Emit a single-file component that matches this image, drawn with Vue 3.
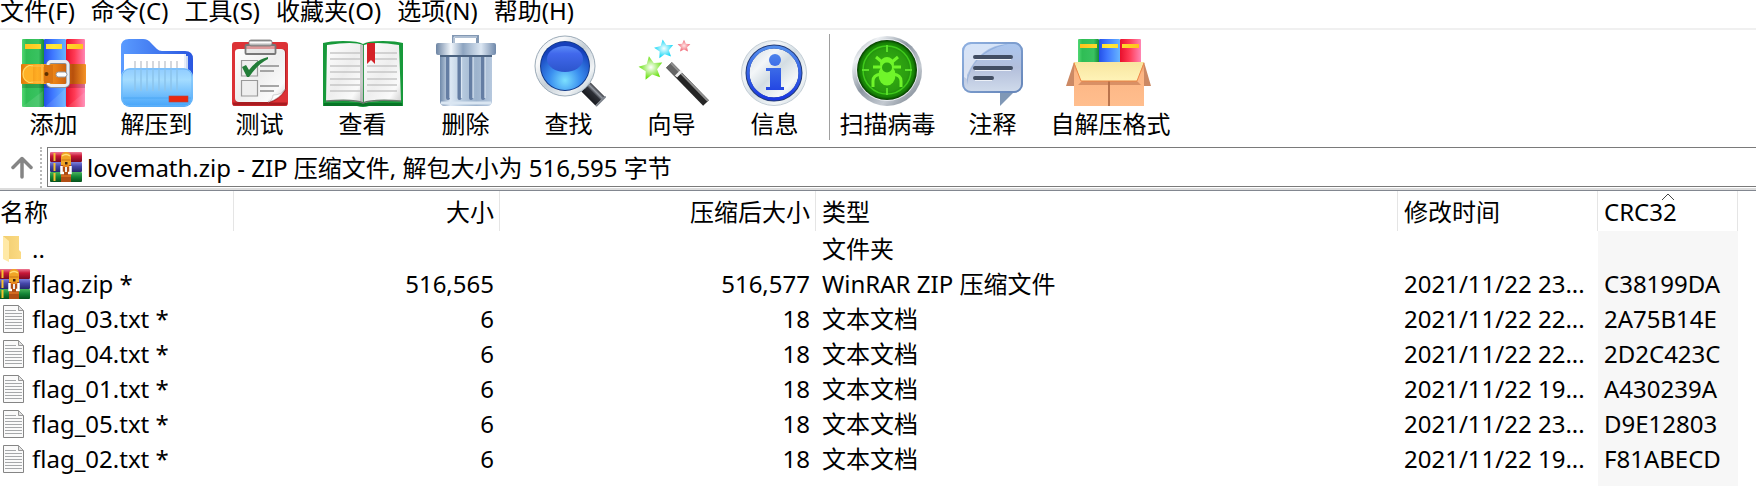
<script setup>
import { ref } from 'vue'

const menus = ['文件(F)', '命令(C)', '工具(S)', '收藏夹(O)', '选项(N)', '帮助(H)']
const mainTools = [
  { id: 'add', label: '添加' },
  { id: 'extract', label: '解压到' },
  { id: 'test', label: '测试' },
  { id: 'view', label: '查看' },
  { id: 'delete', label: '删除' },
  { id: 'find', label: '查找' },
  { id: 'wizard', label: '向导' },
  { id: 'info', label: '信息' }
]
const extraTools = [
  { id: 'scan', label: '扫描病毒' },
  { id: 'comment', label: '注释' },
  { id: 'sfx', label: '自解压格式' }
]
const groups = [mainTools, extraTools]
const address = ref('lovemath.zip - ZIP 压缩文件, 解包大小为 516,595 字节')
const files = [
  { icon: 'folder', name: '..', size: '', packed: '', type: '文件夹', date: '', crc: '' },
  { icon: 'rar', name: 'flag.zip *', size: '516,565', packed: '516,577', type: 'WinRAR ZIP 压缩文件', date: '2021/11/22 23...', crc: 'C38199DA' },
  { icon: 'text', name: 'flag_03.txt *', size: '6', packed: '18', type: '文本文档', date: '2021/11/22 22...', crc: '2A75B14E' },
  { icon: 'text', name: 'flag_04.txt *', size: '6', packed: '18', type: '文本文档', date: '2021/11/22 22...', crc: '2D2C423C' },
  { icon: 'text', name: 'flag_01.txt *', size: '6', packed: '18', type: '文本文档', date: '2021/11/22 19...', crc: 'A430239A' },
  { icon: 'text', name: 'flag_05.txt *', size: '6', packed: '18', type: '文本文档', date: '2021/11/22 23...', crc: 'D9E12803' },
  { icon: 'text', name: 'flag_02.txt *', size: '6', packed: '18', type: '文本文档', date: '2021/11/22 19...', crc: 'F81ABECD' }
]
const star = 'M0 -12L3.6 -4.4L12 -3.4L5.8 2.3L7.4 10.6L0 6.5L-7.4 10.6L-5.8 2.3L-12 -3.4L-3.6 -4.4Z'
</script>

<template>
  <div class="window">
    <svg class="defs" width="0" height="0" aria-hidden="true">
      <defs>
        <linearGradient id="gGreen"><stop offset="0" stop-color="#52d873" /><stop offset=".2" stop-color="#2fbd55" /><stop offset=".75" stop-color="#39c260" /><stop offset="1" stop-color="#168a38" /></linearGradient>
        <linearGradient id="gBlue"><stop offset="0" stop-color="#2450e8" /><stop offset=".4" stop-color="#3f78ff" /><stop offset="1" stop-color="#66b4ff" /></linearGradient>
        <linearGradient id="gRed"><stop offset="0" stop-color="#e8102c" /><stop offset=".45" stop-color="#ff3a55" /><stop offset="1" stop-color="#ff86b4" /></linearGradient>
        <linearGradient id="gYellow"><stop offset="0" stop-color="#ffc21c" /><stop offset=".5" stop-color="#ffe93a" /><stop offset="1" stop-color="#ffc21c" /></linearGradient>
        <linearGradient id="gBelt"><stop offset="0" stop-color="#e07a08" /><stop offset=".25" stop-color="#ffae24" /><stop offset=".55" stop-color="#e67c14" /><stop offset=".8" stop-color="#b8500c" /><stop offset="1" stop-color="#f59427" /></linearGradient>
        <linearGradient id="gBack" x2="1"><stop offset="0" stop-color="#5a9bff" /><stop offset="1" stop-color="#2a57e0" /></linearGradient>
        <linearGradient id="gFront" x2="0" y2="1"><stop offset="0" stop-color="#8fcbff" /><stop offset=".3" stop-color="#a4dcff" /><stop offset="1" stop-color="#45a4fa" /></linearGradient>
        <linearGradient id="gPaper" x2="1" y2="1"><stop offset="0" stop-color="#fff" /><stop offset=".5" stop-color="#eee" /><stop offset=".8" stop-color="#fafafa" /><stop offset="1" stop-color="#ccc" /></linearGradient>
        <linearGradient id="gClip" x2="0" y2="1"><stop offset="0" stop-color="#777" /><stop offset=".4" stop-color="#fff" /><stop offset="1" stop-color="#888" /></linearGradient>
        <linearGradient id="gLid"><stop offset="0" stop-color="#6c84a3" /><stop offset=".25" stop-color="#f2f7fc" /><stop offset=".45" stop-color="#8da4c0" /><stop offset=".75" stop-color="#dce7f3" /><stop offset="1" stop-color="#6f88aa" /></linearGradient>
        <linearGradient id="gBin"><stop offset="0" stop-color="#6f89aa" /><stop offset=".2" stop-color="#dde8f4" /><stop offset=".45" stop-color="#b4c8dd" /><stop offset=".7" stop-color="#9db3cd" /><stop offset="1" stop-color="#b6c8de" /></linearGradient>
        <radialGradient id="gLens" cy=".8" r=".7"><stop offset="0" stop-color="#7ce0ff" /><stop offset=".45" stop-color="#3b90f0" /><stop offset="1" stop-color="#1640bb" /></radialGradient>
        <linearGradient id="gShine" x2="0" y2="1"><stop offset="0" stop-color="#5a8cf6" /><stop offset=".3" stop-color="#4168ec" /><stop offset="1" stop-color="#2c55cc" /></linearGradient>
        <linearGradient id="gHandle" gradientUnits="userSpaceOnUse" x1="58" y1="64" x2="67" y2="55"><stop offset="0" stop-color="#1b1d22" /><stop offset=".5" stop-color="#2c2f36" /><stop offset=".72" stop-color="#9297a0" /><stop offset="1" stop-color="#25272c" /></linearGradient>
        <linearGradient id="gMetal" x2="1" y2="1"><stop offset="0" stop-color="#dce4e9" /><stop offset=".25" stop-color="#fafafa" /><stop offset=".5" stop-color="#c4ced6" /><stop offset=".75" stop-color="#f1f4f6" /><stop offset="1" stop-color="#9eb0bd" /></linearGradient>
        <linearGradient id="gDisc" x2="1" y2="1"><stop offset="0" stop-color="#cdd8e0" /><stop offset=".3" stop-color="#f3f6f8" /><stop offset=".5" stop-color="#d3dde3" /><stop offset=".75" stop-color="#f4f7f8" /><stop offset="1" stop-color="#bccad4" /></linearGradient>
        <linearGradient id="gSteel" x2="1" y2="1"><stop offset="0" stop-color="#77818e" /><stop offset=".2" stop-color="#eef1f4" /><stop offset=".45" stop-color="#8c96a2" /><stop offset=".7" stop-color="#c4cad1" /><stop offset="1" stop-color="#626d7a" /></linearGradient>
        <linearGradient id="gInfo" gradientUnits="userSpaceOnUse" x1="0" y1="10" x2="0" y2="66"><stop offset="0" stop-color="#5591ed" /><stop offset="1" stop-color="#1734e0" /></linearGradient>
        <radialGradient id="gRadar"><stop offset="0" stop-color="#37b411" /><stop offset=".7" stop-color="#2a9c10" /><stop offset=".9" stop-color="#168205" /><stop offset="1" stop-color="#063b00" /></radialGradient>
        <linearGradient id="gBubble" x2="0" y2="1"><stop offset="0" stop-color="#a9c6f0" /><stop offset=".5" stop-color="#b3bfdb" /><stop offset="1" stop-color="#d1dcec" /></linearGradient>
        <linearGradient id="gBubbleShade" x2="1" y2="1"><stop offset="0" stop-color="#8fb0e0" /><stop offset="1" stop-color="#6585b8" /></linearGradient>
        <radialGradient id="gStarG"><stop offset="0" stop-color="#fff" /><stop offset="1" stop-color="#69e010" /></radialGradient>
        <radialGradient id="gStarC"><stop offset="0" stop-color="#f4ffff" /><stop offset="1" stop-color="#16d6f6" /></radialGradient>
        <radialGradient id="gStarR"><stop offset="0" stop-color="#ffe4e4" /><stop offset="1" stop-color="#f06070" /></radialGradient>
        <linearGradient id="gBox" x2="0" y2="1"><stop offset="0" stop-color="#d98b5c" /><stop offset=".25" stop-color="#fcb583" /><stop offset="1" stop-color="#ffbe8e" /></linearGradient>
        <linearGradient id="gFlap" x2="0" y2="1"><stop offset="0" stop-color="#f8e6a0" /><stop offset="1" stop-color="#fff3b8" /></linearGradient>
        <linearGradient id="bRed" x2="0" y2="1"><stop offset="0" stop-color="#ee7a94" /><stop offset=".4" stop-color="#c81838" /><stop offset="1" stop-color="#7a0922" /></linearGradient>
        <linearGradient id="bBlue" x2="0" y2="1"><stop offset="0" stop-color="#7c80dd" /><stop offset=".45" stop-color="#4446a8" /><stop offset="1" stop-color="#26276c" /></linearGradient>
        <linearGradient id="bGreen" x2="0" y2="1"><stop offset="0" stop-color="#48b45a" /><stop offset=".5" stop-color="#128335" /><stop offset="1" stop-color="#06501b" /></linearGradient>
        <linearGradient id="gFold"><stop offset="0" stop-color="#f1cd70" /><stop offset="1" stop-color="#fbda83" /></linearGradient>
        <symbol id="rar" viewBox="0 0 32 30">
          <rect width="32" height="10" rx="1" fill="url(#bRed)" />
          <rect y="10" width="32" height="10" rx="1" fill="url(#bBlue)" />
          <rect y="20" width="32" height="10" rx="1" fill="url(#bGreen)" />
          <path d="M4.500 1V9M4.500 11V19M4.500 21V29" stroke="#f5c22e" stroke-width="2" />
          <rect x="11" y="10" width="10" height="20" fill="#b04e14" />
          <path d="M11 13V5Q11 0 16 0T21 5V13Z" fill="#f0a526" />
          <path d="M12 4Q16 1 20 4" fill="none" stroke="#ffe07a" stroke-width="1.500" />
          <path d="M11.500 8H20.500" stroke="#c87414" stroke-width="1" />
          <rect x="15" y="10" width="2.500" height="2.500" fill="#3c2010" />
          <path d="M11.500 14V21H14M20.500 14V21H18" fill="none" stroke="#fff" stroke-width="2.500" />
          <path d="M13 13H19V15H13Z" fill="#e8851d" />
          <rect x="15" y="15" width="2" height="5" fill="#eee" />
          <path d="M11 24H21" stroke="#d36a20" stroke-width="2" />
        </symbol>
      </defs>
    </svg>

    <nav class="menubar">
      <button v-for="m in menus" :key="m" type="button">{{ m }}</button>
    </nav>

    <div class="toolbar" role="toolbar">
      <div v-for="(group, gi) in groups" :key="gi" class="group">
        <button v-for="t in group" :key="t.id" type="button" :class="['tool', t.id]">
          <svg class="tool-icon" viewBox="0 0 73 72" aria-hidden="true">
            <g v-if="t.id === 'add'">
              <rect x="5" y="4" width="22" height="68" rx="1" fill="url(#gGreen)" />
              <rect x="27" y="4" width="22" height="68" rx="1" fill="url(#gBlue)" />
              <rect x="49" y="4" width="19" height="68" rx="1" fill="url(#gRed)" />
              <path d="M8 9H24V14H8ZM29 9H45V14H29ZM50 9H66V14H50Z" fill="url(#gYellow)" />
              <path d="M5 72L26 56V72ZM28 72L48 54V72ZM50 72L68 57V72Z" fill="#fff" opacity=".1" />
              <path d="M5 49H68V53H5Z" fill="#000" opacity=".16" />
              <rect x="4" y="29" width="65" height="20" rx="1" fill="url(#gBelt)" />
              <path d="M16 30.500H12Q6 33 6 39T12 47.500H16" fill="#ffb127" stroke="#ffda65" stroke-width="1.200" />
              <path d="M14 31H30M14 47H30" stroke="#ffc14e" stroke-width="1" />
              <rect x="31" y="27" width="20" height="24" rx="3" fill="none" stroke="#8a8f98" stroke-width="4" />
              <rect x="31" y="26.500" width="20" height="24" rx="3" fill="none" stroke="#e9edf3" stroke-width="2.800" />
              <rect x="27" y="30" width="9" height="18" fill="#db7512" />
              <path d="M25 29V49" stroke="#ffb641" stroke-width="2" />
              <circle cx="29.500" cy="39" r="2" fill="#5c3000" />
              <rect x="39" y="37" width="11" height="5" rx="2.500" fill="#fff" stroke="#9299a3" stroke-width="1" />
            </g>
            <g v-else-if="t.id === 'extract'">
              <path d="M1 60V12Q1 4 9 4H23Q28 4 31 8L37 14Q39 16 42 16H65Q73 16 73 24V60Z" fill="url(#gBack)" />
              <path d="M60 21H68V40H60Z" fill="#c9d8f2" />
              <path d="M56 19H66V40H56Z" fill="#e9eff9" />
              <path d="M4 19H64V45H4Z" fill="#fff" />
              <rect x="1" y="33" width="72" height="39" rx="9" fill="url(#gFront)" />
              <rect x="2" y="34" width="70" height="37" rx="8" fill="none" stroke="#6bb6f9" stroke-width="1" />
              <path d="M15 26V33M21 26V33M27 26V33M33 26V33M39 26V33M45 26V33M51 26V33M57 26V33" stroke="#c8ccd2" stroke-width="1.500" />
              <path d="M15 34V56M21 34V56M27 34V56M33 34V56M39 34V56M45 34V56M51 34V56M57 34V56" stroke="#8cc4ec" stroke-width="1.500" />
              <path d="M3 63H71" stroke="#379bf0" stroke-width="1" opacity=".5" />
              <rect x="49" y="61" width="19" height="6" fill="#e9280f" stroke="#b64640" stroke-width=".6" />
            </g>
            <g v-else-if="t.id === 'test'">
              <rect x="9" y="7" width="56" height="64" rx="3" fill="#dc3236" />
              <path d="M10 69H64" stroke="#a81b20" stroke-width="3" />
              <path d="M14 17Q14 14 17 14H59Q63 14 63 18V55Q55 66 47 68H17Q12 68 12 64Z" fill="#8c1215" opacity=".5" />
              <path d="M12 17Q12 14 16 14H58Q62 14 62 18V54Q56 63 45 67H16Q12 67 12 63Z" fill="url(#gPaper)" />
              <path d="M62 54Q59 60 50 60Q50 65 45 67Q57 64 62 54Z" fill="#fff" stroke="#bbb" stroke-width=".6" />
              <rect x="22.500" y="10" width="30" height="9" rx="1" fill="#ddd" fill-opacity=".6" stroke="#777" stroke-width="1.800" />
              <rect x="26" y="5" width="23" height="6" rx="2" fill="url(#gClip)" stroke="#777" stroke-width=".8" />
              <path d="M18.500 25.500H34.500V41H18.500ZM18.500 45.500H34.500V61H18.500Z" fill="#eee" stroke="#999" stroke-width="1.200" />
              <path d="M19 32L23 30L26 35Q33 25 45 22V24Q35 29 26 42H24Z" fill="#227d38" />
              <path d="M37 31H56M37 36H51M37 51H56M37 56H51" stroke="#8c8c8c" stroke-width="1.500" />
            </g>
            <g v-else-if="t.id === 'view'">
              <path d="M-3 8Q4 6 17 6Q33 6 37 9Q41 6 57 6Q70 6 77 8V71H43Q37 73 31 71H-3Z" fill="#17993a" />
              <path d="M-2 68H76V71H-2Z" fill="#087426" />
              <path d="M1 10Q28 6 37 10V68Q30 65 0 66Z" fill="url(#gPaper)" />
              <path d="M38 10Q48 6 73 10L75 66Q46 65 38 68Z" fill="url(#gPaper)" />
              <path d="M34 10Q36 9 37.500 10V68Q36 66 34 66Z" fill="#999" opacity=".5" />
              <path d="M0 66Q30 64 37 68Q46 64 75 66" fill="none" stroke="#6b7a6d" stroke-width="1.500" />
              <path d="M4 18H34M4 24H34M4 31H34M4 37H34M4 44H34M4 50H34M4 56H34M41 18H71M41 24H71M41 31H71M41 37H71M41 44H71M41 50H71M41 56H71" stroke="#c6c6c6" stroke-width="1.400" />
              <path d="M41 8H49V29L45 25L41 29Z" fill="#d42127" />
            </g>
            <g v-else-if="t.id === 'delete'">
              <path d="M24.500 9V1.500H48.500V9" fill="none" stroke="#8398b3" stroke-width="3" />
              <path d="M25 8V2H48" fill="none" stroke="#dbe6f2" stroke-width="1" />
              <path d="M11 20H63V66Q63 71 58 71H16Q11 71 11 66Z" fill="url(#gBin)" />
              <path d="M12 68H62" stroke="#dae6f2" stroke-width="3" />
              <path d="M19 21V63M30.500 21V63M42 21V63M54 21V63" stroke="#647da3" stroke-width="4" stroke-linecap="round" />
              <path d="M21 21V63M32.500 21V63M44 21V63M56 21V63" stroke="#d9e5f2" stroke-width="1.200" />
              <rect x="7" y="8" width="60" height="12" rx="2" fill="url(#gLid)" />
              <path d="M11 21H63" stroke="#4c6381" stroke-width="2" />
            </g>
            <g v-else-if="t.id === 'find'">
              <path d="M49 48L55 54" stroke="#b4bcc6" stroke-width="8" />
              <path d="M54 52L68 66" stroke="url(#gHandle)" stroke-width="13" />
              <path d="M64.500 70.500L73 62" stroke="#7c828b" stroke-width="2" stroke-linecap="round" />
              <circle cx="33" cy="31" r="30" fill="url(#gMetal)" stroke="#9cabb8" stroke-width="1" />
              <circle cx="33" cy="31" r="25" fill="#103888" />
              <circle cx="33" cy="31" r="24" fill="url(#gLens)" />
              <ellipse cx="33" cy="24" rx="18" ry="13" fill="url(#gShine)" />
            </g>
            <g v-else-if="t.id === 'wizard'">
              <path :d="star" transform="translate(16 33) rotate(-10)" fill="url(#gStarG)" />
              <path :d="star" transform="translate(29 14) rotate(-8) scale(.8)" fill="url(#gStarC)" />
              <path :d="star" transform="translate(49 11) scale(.53)" fill="url(#gStarR)" />
              <path d="M34 30L71 68" stroke="#262626" stroke-width="8" />
              <path d="M34 30L43 39" stroke="#666" stroke-width="8" />
              <path d="M36 28L73 66" stroke="#929292" stroke-width="1.800" />
              <path d="M41 41.500L46.500 36" stroke="#eee" stroke-width="3" />
            </g>
            <g v-else-if="t.id === 'info'">
              <circle cx="36" cy="38" r="32.500" fill="url(#gDisc)" stroke="#c4ced6" stroke-width="1" />
              <circle cx="36" cy="38" r="26.500" fill="url(#gDisc)" stroke="#243c78" stroke-width="4" />
              <circle cx="36" cy="38" r="26" fill="none" stroke="url(#gInfo)" stroke-width="3" />
              <circle cx="37" cy="25" r="6" fill="url(#gInfo)" />
              <path d="M28 33H43V52H46V55H28V52H32V36H28Z" fill="url(#gInfo)" />
            </g>
            <g v-else-if="t.id === 'scan'">
              <circle cx="36" cy="36" r="35" fill="url(#gSteel)" />
              <circle cx="36" cy="35" r="31" fill="#e8ebef" />
              <circle cx="36" cy="35" r="30" fill="url(#gRadar)" />
              <circle cx="36" cy="35" r="24" fill="none" stroke="#3fca1b" stroke-width="1.500" />
              <path d="M36 10V17M36 53V60M11 35H18M54 35H61" stroke="#59df29" stroke-width="2" />
              <ellipse cx="36" cy="40" rx="8.500" ry="10.500" fill="#70f52a" />
              <circle cx="36" cy="29" r="7" fill="#70f52a" />
              <circle cx="36" cy="32.500" r="5" fill="#2ba30f" />
              <path d="M31 27L25 22M41 27L47 22M30 32H22M42 32H50M30 39Q22 40 22 46V52M42 39Q50 40 50 46V52" fill="none" stroke="#70f52a" stroke-width="3" />
            </g>
            <g v-else-if="t.id === 'comment'">
              <path d="M44 56V71L59 56Z" fill="#8098b6" />
              <rect x="6" y="7" width="61" height="51" rx="9" fill="url(#gBubble)" />
              <path d="M8 42V17Q8 9 16 9H50Q20 14 11 44Z" fill="#f4f8ff" opacity=".6" />
              <path d="M11 50Q14 18 52 9Q24 10 11 40Z" fill="#638bc8" opacity=".4" />
              <rect x="7" y="8" width="59" height="49" rx="8" fill="none" stroke="url(#gBubbleShade)" stroke-width="2" />
              <path d="M19 22H55M19 33H55M19 43H36" stroke="#424e63" stroke-width="4" stroke-linecap="round" />
              <path d="M19 24.500H55M19 35.500H55M19 45.500H36" stroke="#edf1f8" stroke-width="1" />
            </g>
            <g v-else>
              <rect x="4" y="4" width="21" height="26" rx="1" fill="url(#gGreen)" />
              <rect x="25" y="4" width="21" height="26" rx="1" fill="url(#gBlue)" />
              <rect x="46" y="4" width="21" height="26" rx="1" fill="url(#gRed)" />
              <path d="M6 9H23V13H6ZM28 9H44V13H28ZM48 9H65V13H48Z" fill="url(#gYellow)" />
              <path d="M0 27L-8 51H0ZM70 27L77 51H70Z" fill="#cc8964" />
              <path d="M0 27H70V71H0Z" fill="url(#gBox)" />
              <path d="M4 50L8 46H63L67 50Z" fill="#b66843" opacity=".5" />
              <path d="M35 46V71" stroke="#b36c46" stroke-width="1.800" />
              <path d="M0 27H70L63 46H7Z" fill="url(#gFlap)" />
              <path d="M0 28L7 46H63L70 28" fill="none" stroke="#ed8645" stroke-width="1" />
            </g>
          </svg>
          <span>{{ t.label }}</span>
        </button>
      </div>
    </div>

    <div class="addressbar">
      <button type="button" class="up" aria-label="向上">
        <svg viewBox="0 0 22 24" width="22" height="24"><path d="M2 11.500L11 2.500L20 11.500M11 3V21" fill="none" stroke="#858585" stroke-width="3.500" stroke-linecap="round" stroke-linejoin="round" /></svg>
      </button>
      <span class="grip"></span>
      <label class="address">
        <svg width="32" height="30" aria-hidden="true"><use href="#rar" /></svg>
        <input v-model="address" type="text" aria-label="地址" />
      </label>
    </div>

    <table class="files">
      <colgroup>
        <col class="c-name" /><col class="c-size" /><col class="c-packed" /><col /><col class="c-date" /><col class="c-crc" /><col class="c-rest" />
      </colgroup>
      <thead>
        <tr>
          <th class="name">名称</th>
          <th class="num">大小</th>
          <th class="num">压缩后大小</th>
          <th>类型</th>
          <th>修改时间</th>
          <th class="sorted" aria-sort="ascending">CRC32
            <svg class="caret" width="14" height="8" viewBox="0 0 14 8" aria-hidden="true"><path d="M1 7L7 1L13 7" fill="none" stroke="#444" stroke-width="1" /></svg>
          </th>
          <td></td>
        </tr>
      </thead>
      <tbody>
        <tr v-for="f in files" :key="f.name">
          <td class="name">
            <div class="entry">
              <span class="file-icon">
                <svg v-if="f.icon === 'folder'" class="folder" width="24" height="28" viewBox="0 0 24 28" aria-hidden="true">
                  <path d="M3 1H19V15L21 17V24H3Z" fill="url(#gFold)" />
                  <path d="M3 1L9 6V27L3 24Z" fill="#ffe9a6" />
                </svg>
                <svg v-else-if="f.icon === 'rar'" class="archive" width="32" height="30" aria-hidden="true"><use href="#rar" /></svg>
                <svg v-else width="24" height="28" viewBox="0 0 24 28" aria-hidden="true">
                  <path d="M3.500 .500H18.500L23.500 5.500V27.500H3.500Z" fill="#fafafa" stroke="#858585" />
                  <path d="M18.500 .500V5.500H23.500Z" fill="#e2e2e2" stroke="#999" />
                  <path d="M5 5.500H16M5 8.500H22M5 11.500H22M5 14.500H22M5 17.500H22M5 20.500H22M5 23.500H22" stroke="#a6a8aa" />
                </svg>
              </span>
              <span>{{ f.name }}</span>
            </div>
          </td>
          <td class="num">{{ f.size }}</td>
          <td class="num">{{ f.packed }}</td>
          <td>{{ f.type }}</td>
          <td>{{ f.date }}</td>
          <td class="sorted">{{ f.crc }}</td>
          <td></td>
        </tr>
        <tr class="tail"><td colspan="5"></td><td class="sorted"></td><td></td></tr>
      </tbody>
    </table>
  </div>
</template>

<style>
body {
  margin: 0;
  background: #fff;
  overflow: hidden;
}
</style>

<style scoped>
.window {
  font-family: "Noto Sans", "Noto Sans CJK SC", sans-serif;
  font-size: 24px;
  color: #000;
  background: #fff;
}
.defs {
  position: absolute;
}
button,
input {
  font: inherit;
  color: inherit;
  background: none;
  border: 0;
  padding: 0;
  margin: 0;
}
.menubar {
  display: flex;
  gap: 16px;
  height: 28px;
  border-bottom: 2px solid #f0f0f0;
}
.menubar button {
  height: 22px;
  line-height: 22px;
  white-space: nowrap;
}
.toolbar {
  display: flex;
  height: 117px;
}
.group {
  display: flex;
  padding-left: 2px;
}
.group + .group {
  margin: 4px 0 7px 3px;
  padding-left: 6px;
  border-left: 1px solid #a0a0a0;
}
.group + .group .tool {
  padding-top: 1px;
}
.tool {
  display: flex;
  flex-direction: column;
  align-items: center;
  width: 103px;
  padding-top: 5px;
}
.tool.comment {
  width: 107px;
}
.tool.sfx {
  width: 129px;
}
.tool-icon {
  flex: none;
  width: 73px;
  height: 72px;
  overflow: visible;
}
.tool span {
  line-height: 34px;
  white-space: nowrap;
}
.addressbar {
  display: flex;
  height: 41px;
  border-bottom: 2px solid #dcdcdc;
}
.up {
  width: 40px;
  padding-left: 4px;
}
.up svg {
  display: block;
  margin: 0 auto;
}
.grip {
  width: 0;
  margin-right: 5px;
  border-left: 2px dotted #b8b8b8;
}
.address {
  flex: 1;
  display: flex;
  align-items: center;
  gap: 5px;
  height: 38px;
  padding-left: 2px;
  border: 1px solid #7a7a7a;
  border-right: 0;
}
.address input {
  flex: 1;
  height: 36px;
  padding-bottom: 2px;
  outline: 0;
}
.files {
  width: 100%;
  table-layout: fixed;
  border-collapse: separate;
  border-spacing: 0;
  border-top: 1px solid #828790;
}
.c-name { width: 234px; }
.c-size { width: 266px; }
.c-packed { width: 316px; }
.c-date { width: 200px; }
.c-crc { width: 140px; }
.c-rest { width: 18px; }
.files th,
.files td {
  height: 35px;
  padding: 0 6px;
  line-height: 35px;
  font-weight: 400;
  text-align: left;
  white-space: nowrap;
}
.files th {
  position: relative;
  height: 38px;
  padding-top: 2px;
  line-height: 38px;
  border-right: 1px solid #e5e5e5;
}
.files .num {
  text-align: right;
}
.files th.num {
  padding-right: 5px;
}
.files .name {
  padding-left: 0;
}
td.sorted {
  background: #f7f7f7;
}
.caret {
  position: absolute;
  top: 2px;
  left: 63px;
}
.entry {
  display: flex;
  align-items: center;
}
.file-icon {
  display: flex;
  flex: none;
  justify-content: flex-end;
  width: 24px;
  margin-right: 8px;
}
.file-icon .archive {
  flex: none;
  margin-right: -6px;
}
.files .tail td {
  height: 10px;
  line-height: 10px;
}
</style>
